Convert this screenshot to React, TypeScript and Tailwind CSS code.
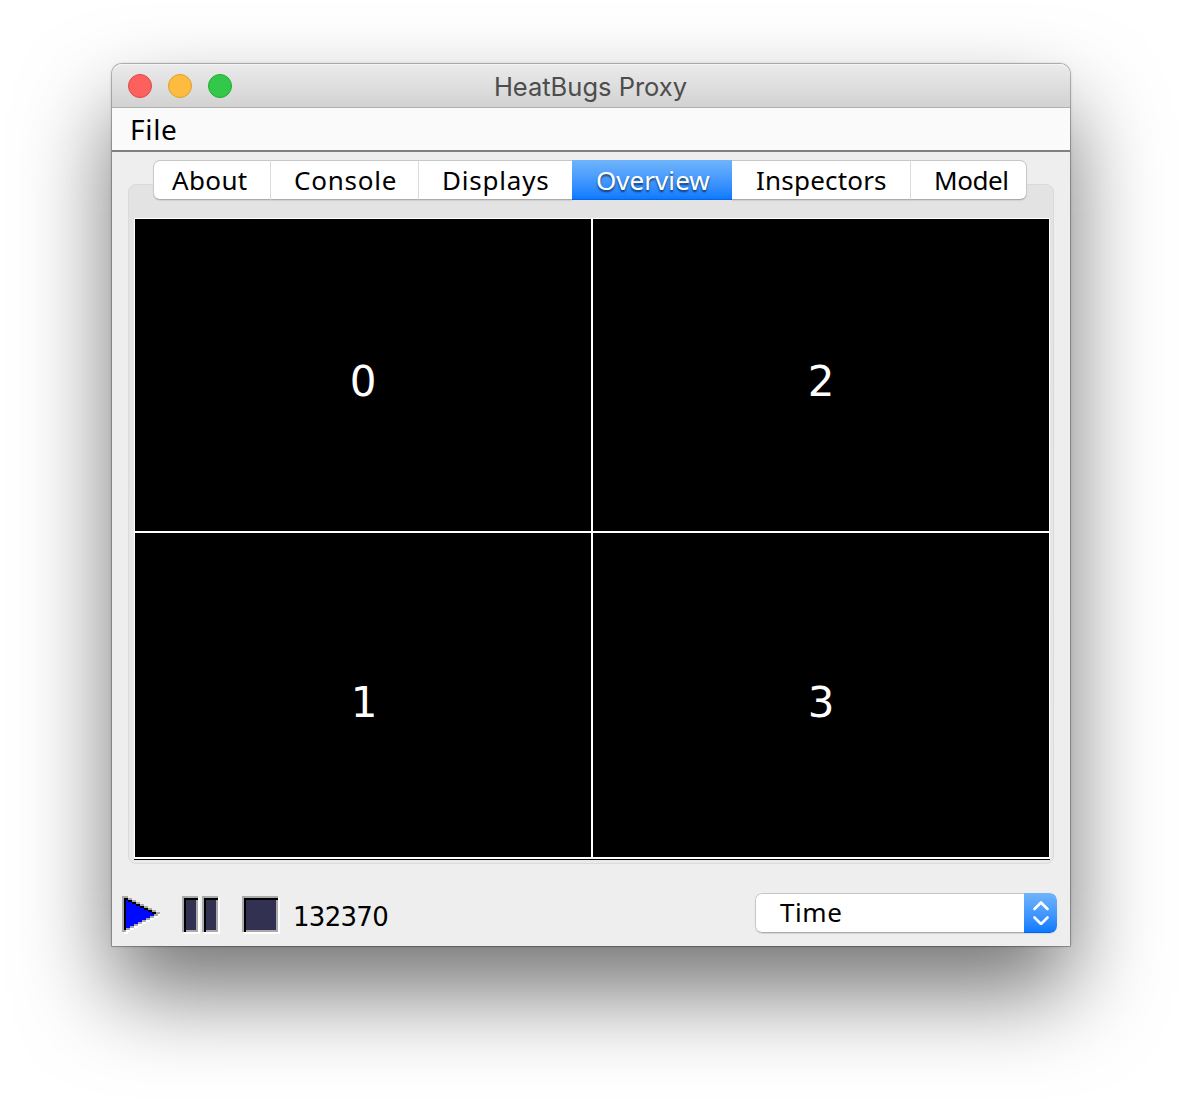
import React from "react";

const tabs = [
  { label: "About", w: "w-[118px]", ls: "tracking-[0.35px]", pad: "pl-[18px]" },
  { label: "Console", w: "w-[148px]", ls: "tracking-[0.77px]", pad: "pl-[23px]" },
  { label: "Displays", w: "w-[153px]", ls: "tracking-[0.8px]", pad: "pl-[23px]" },
  { label: "Overview", w: "w-[160px]", ls: "tracking-[0.05px]", pad: "pl-[24px]" },
  { label: "Inspectors", w: "w-[179px]", ls: "tracking-[0.2px]", pad: "pl-[24px]" },
  { label: "Model", w: "w-[116px]", ls: "tracking-[-0.4px]", pad: "pl-[23px]" },
];

function Tab({ tab, index }: { tab: (typeof tabs)[number]; index: number }) {
  const active = tab.label === "Overview";
  const edge =
    index === 0 ? "rounded-l-[7px] border-l border-l-[#c9c9c9]" : index === 5 ? "rounded-r-[7px] border-r border-r-[#c9c9c9]" : "";
  const divider = index < 5 && index !== 2 && !active ? "border-r border-r-[#dedede]" : "";
  const look = active
    ? "bg-gradient-to-b from-[#6fb4fb] to-[#077bff] text-white border-b border-b-[#0662ef] [text-shadow:0_2px_2px_rgba(0,0,0,0.6)]"
    : "bg-white text-black border-t border-t-[#c6c6c6] border-b border-b-[#ababab] shadow-[0_1px_1px_rgba(0,0,0,0.08)]";
  return (
    <button className={`flex h-10 shrink-0 items-center ${tab.w} ${tab.ls} ${tab.pad} ${edge} ${divider} ${look}`}>
      {tab.label}
    </button>
  );
}

const upperRows = [1, 2, 3, 4, 5, 6, 7, 8];
const lowerRows = [9, 10, 11, 12, 13, 14, 15, 16];

function PlayIcon() {
  return (
    <svg className="h-[38px] w-[38px]" viewBox="0 0 19 19" shapeRendering="crispEdges">
      <rect width="3" height="1" fill="#aaa" />
      {upperRows.map((r) => (
        <g key={r}>
          <rect x="1" y={r} width={2 * r} height="1" fill="#0008ff" />
          <rect x={2 * r - 1} y={r} width="2" height="1" fill="#000" />
          <rect x={2 * r + 1} y={r} width="2" height="1" fill="#aaa" />
        </g>
      ))}
      {lowerRows.map((r) => (
        <g key={r}>
          <rect x="1" y={r} width={33 - 2 * r} height="1" fill="#0008ff" />
          <rect x={34 - 2 * r} y={r} width="2" height="1" fill="#aaa" />
          <rect x={36 - 2 * r} y={r} width="2" height="1" fill="#fff" />
        </g>
      ))}
      <rect x="1" y="1" width="1" height="16" fill="#000" />
      <rect x="0" y="0" width="1" height="18" fill="#aaa" />
      <rect x="1" y="17" width="1" height="1" fill="#aaa" />
      <rect x="2" y="17" width="2" height="1" fill="#fff" />
      <rect x="1" y="18" width="2" height="1" fill="#fff" />
    </svg>
  );
}

function PauseIcon() {
  return (
    <svg className="h-[38px] w-[38px]" viewBox="0 0 19 19" shapeRendering="crispEdges">
      {[0, 10].map((x) => (
        <g key={x} transform={`translate(${x} 0)`}>
          <path d="M1 1H9V19H1Z" fill="#fff" />
          <path d="M0 0H8V18H0Z" fill="#aaa" />
          <path d="M1 1H8V2H2V18H1Z" fill="#000" />
          <path d="M2 2H7V17H2Z" fill="#333152" />
        </g>
      ))}
    </svg>
  );
}

function StopIcon() {
  return (
    <svg className="h-[38px] w-[38px]" viewBox="0 0 19 19" shapeRendering="crispEdges">
      <path d="M1 1H19V19H1Z" fill="#fff" />
      <path d="M0 0H18V18H0Z" fill="#aaa" />
      <path d="M1 1H18V2H2V18H1Z" fill="#000" />
      <path d="M2 2H17V17H2Z" fill="#333152" />
    </svg>
  );
}

const cell = "flex items-center justify-center bg-black text-white";

export default function App() {
  return (
    <div className="h-[1106px] w-[1182px] overflow-hidden bg-white px-[112px] pt-16 font-['Noto_Sans',sans-serif] text-[26px] leading-none">
      <div className="flex h-[882px] w-[958px] flex-col rounded-t-[10px] bg-[#eeeeee] shadow-[0_0_0_1px_rgba(0,0,0,0.2),0_0_3px_rgba(0,0,0,0.3),0_46px_90px_rgba(0,0,0,0.55)]">
        <header className="flex h-11 shrink-0 items-center rounded-t-[10px] border-b border-[#b1b1b1] bg-gradient-to-b from-[#ebebeb] to-[#d2d2d2] pl-4 shadow-[inset_0_1px_0_#f5f5f5]">
          <div className="flex w-[104px] gap-4">
            <i className="size-6 rounded-full border border-[#e2463f] bg-[#fc615d]" />
            <i className="size-6 rounded-full border border-[#dfa023] bg-[#fdbc40]" />
            <i className="size-6 rounded-full border border-[#1dad2b] bg-[#34c84a]" />
          </div>
          <h1 className="w-[717px] pt-[3px] text-center font-[Inter] text-[25.5px] font-normal text-[#4d4d4d]">HeatBugs Proxy</h1>
        </header>
        <nav className="flex h-11 shrink-0 items-center border-b-2 border-[#808080] bg-[#fafafa] pl-[18px] text-[28px] tracking-[0.7px]">File</nav>

        <main className="mx-4 mt-2 h-[711px] shrink-0">
          <div className="relative z-10 flex h-10 pl-[25px]">
            {tabs.map((t, i) => (
              <Tab key={t.label} tab={t} index={i} />
            ))}
          </div>
          <section className="-mt-4 h-[680px] w-[926px] rounded-lg border border-[#dadada] bg-gradient-to-b from-[#e3e3e3] to-[#e9e9e9] pl-[5px] pr-[3px] pt-[33px]">
            <div className="grid h-[641px] grid-cols-[456px_456px] grid-rows-[312px_324px] gap-[2px] border-x border-t border-white bg-white font-['DejaVu_Sans',sans-serif] text-[42px]">
              <div className={`${cell} pt-[14px]`}>0</div>
              <div className={`${cell} pt-[14px]`}>2</div>
              <div className={`${cell} pl-[2px] pt-4`}>1</div>
              <div className={`${cell} pt-4`}>3</div>
            </div>
            <div className="h-px bg-black" />
          </section>
        </main>

        <footer className="flex items-start pl-[10px] pr-[13px] pt-[22px]">
          <div className="flex gap-[22px] pt-[3px]">
            <PlayIcon />
            <PauseIcon />
            <StopIcon />
          </div>
          <span className="ml-[13px] mt-[11px] font-['DejaVu_Sans',sans-serif] tracking-[-0.7px]">132370</span>
          <button className="ml-auto flex h-10 w-[302px] items-stretch overflow-hidden rounded-[7px] shadow-[0_1px_1px_rgba(0,0,0,0.1)]">
            <span className="flex flex-1 items-center rounded-l-[7px] border border-r-0 border-[#c6c6c6] border-b-[#ababab] bg-white pb-[2px] pl-6 tracking-[0.6px]">
              Time
            </span>
            <span className="flex w-[33px] items-center justify-center rounded-r-[7px] border-b border-[#0662ef] bg-gradient-to-b from-[#6fb4fb] to-[#077bff]">
              <svg className="h-6 w-4" viewBox="0 0 16 24" fill="none" stroke="#fff" strokeWidth="2.6" strokeLinecap="round" strokeLinejoin="round">
                <path d="M1.500 8L8 1.500L14.500 8M1.500 16.500L8 23L14.500 16.500" />
              </svg>
            </span>
          </button>
        </footer>
      </div>
    </div>
  );
}
